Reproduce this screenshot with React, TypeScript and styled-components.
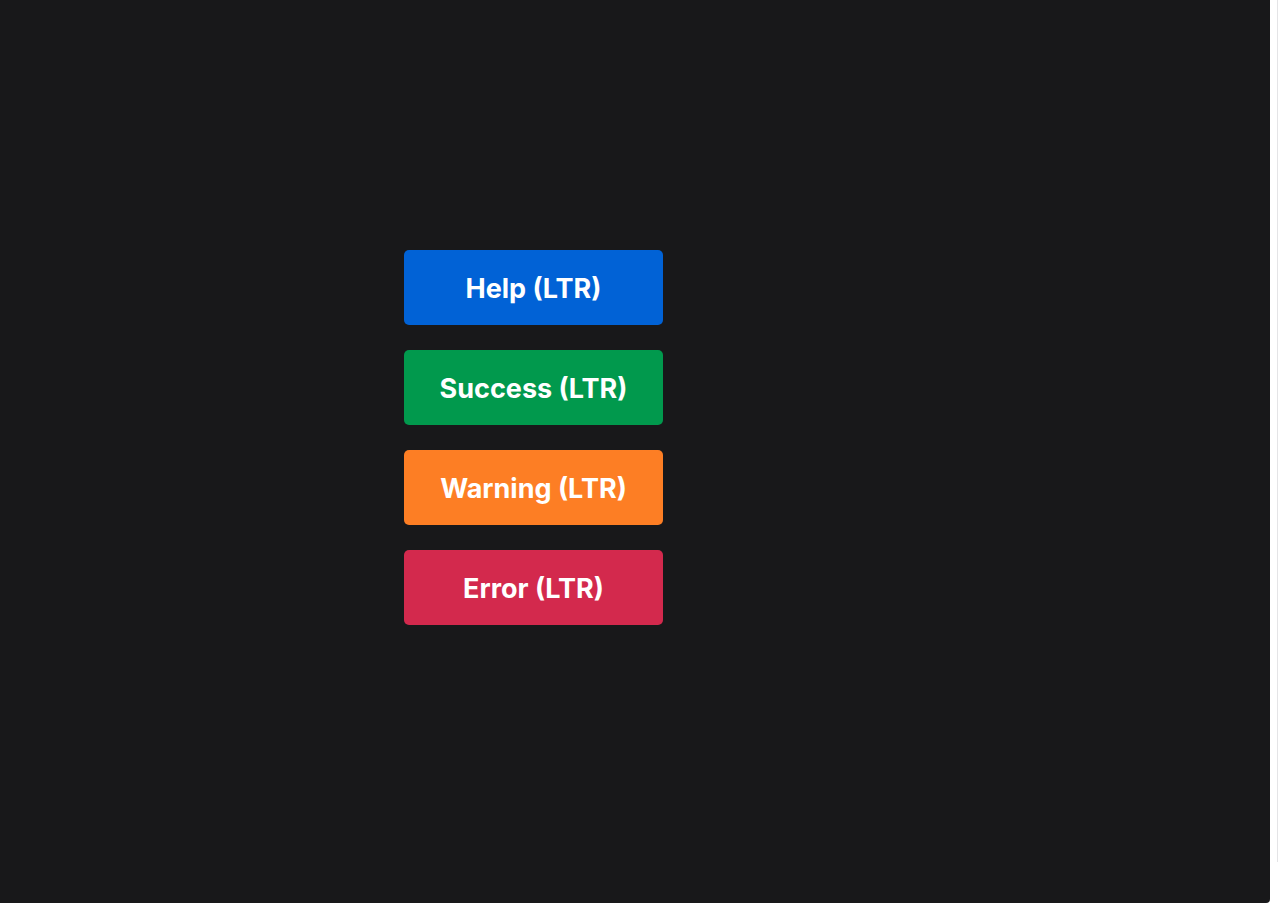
import React from "react";
import styled, { createGlobalStyle } from "styled-components";

const GlobalStyle = createGlobalStyle`
  html, body {
    margin: 0;
    padding: 0;
    background: #ffffff;
  }
  body {
    font-family: Inter, "Noto Sans", "Liberation Sans", sans-serif;
  }
`;

const Page = styled.div`
  width: 1280px;
  height: 905px;
  display: flex;
  background: #ffffff;
  overflow: hidden;
`;

const Stage = styled.main`
  width: 1270px;
  height: 903px;
  flex: none;
  box-sizing: border-box;
  background: #18181a;
  border-bottom-right-radius: 4px;
  padding: 250px 0 0 404px;
`;

const Edge = styled.div`
  width: 1px;
  height: 862px;
  margin-left: 7px;
  background: #e4e4e6;
`;

const Stack = styled.div`
  display: flex;
  flex-direction: column;
  gap: 25px;
  width: 259px;
`;

type Tone = "help" | "success" | "warning" | "error";

const tones: Record<Tone, string> = {
  help: "#0162d6",
  success: "#01994d",
  warning: "#fd7e24",
  error: "#d3294d",
};

const ToneButton = styled.button<{ $tone: Tone }>`
  height: 75px;
  width: 100%;
  border: none;
  border-radius: 5px;
  background: ${(p) => tones[p.$tone]};
  color: #ffffff;
  font-family: Inter, "Noto Sans", "Liberation Sans", sans-serif;
  font-size: 27px;
  font-weight: 700;
  cursor: pointer;
  display: flex;
  align-items: center;
  justify-content: center;
  padding: 2px 0 0;
`;

const buttons: { tone: Tone; label: string }[] = [
  { tone: "help", label: "Help (LTR)" },
  { tone: "success", label: "Success (LTR)" },
  { tone: "warning", label: "Warning (LTR)" },
  { tone: "error", label: "Error (LTR)" },
];

export default function App() {
  return (
    <Page>
      <GlobalStyle />
      <Stage>
        <Stack>
          {buttons.map((b) => (
            <ToneButton key={b.tone} $tone={b.tone}>
              {b.label}
            </ToneButton>
          ))}
        </Stack>
      </Stage>
      <Edge />
    </Page>
  );
}
